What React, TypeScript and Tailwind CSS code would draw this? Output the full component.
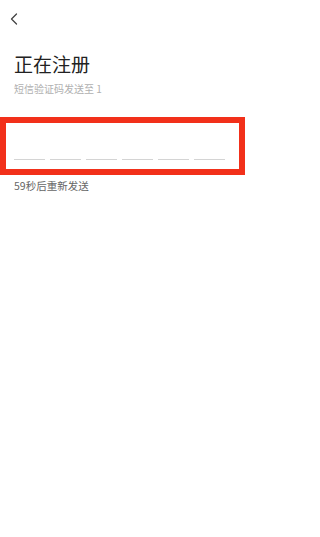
export default function App() {
  const slots = [0, 1, 2, 3, 4, 5];
  return (
    <div
      className="w-[266px] h-[537px] bg-white flex flex-col"
      style={{ fontFamily: '"Noto Sans CJK SC", "Noto Sans", sans-serif' }}
    >
      <div className="h-[38px] pl-[10px] pt-[13px]">
        <svg width="8" height="12" viewBox="0 0 8 12" fill="none">
          <path d="M6.5 1 L1.5 6 L6.5 11" stroke="#444" strokeWidth="1.3" strokeLinecap="round" strokeLinejoin="round" />
        </svg>
      </div>
      <div className="px-[14px] pt-[13px]">
        <h1 className="text-[19px] leading-[26px] text-[#222]">正在注册</h1>
        <p className="mt-[5px] text-[10px] leading-[14px] text-[#b0b0b0]">短信验证码发送至 1</p>
      </div>
      <div className="mt-[21px] w-[245px] h-[58px] border-[6px] border-[#f2301a] flex items-end px-[8px] pb-[9px] gap-[5px]">
        {slots.map((i) => (
          <div key={i} className="w-[31px] h-px bg-[#d4d4d4]" />
        ))}
      </div>
      <p className="mt-[4px] pl-[14px] text-[10.5px] leading-[14px] text-[#666]">59秒后重新发送</p>
    </div>
  );
}
